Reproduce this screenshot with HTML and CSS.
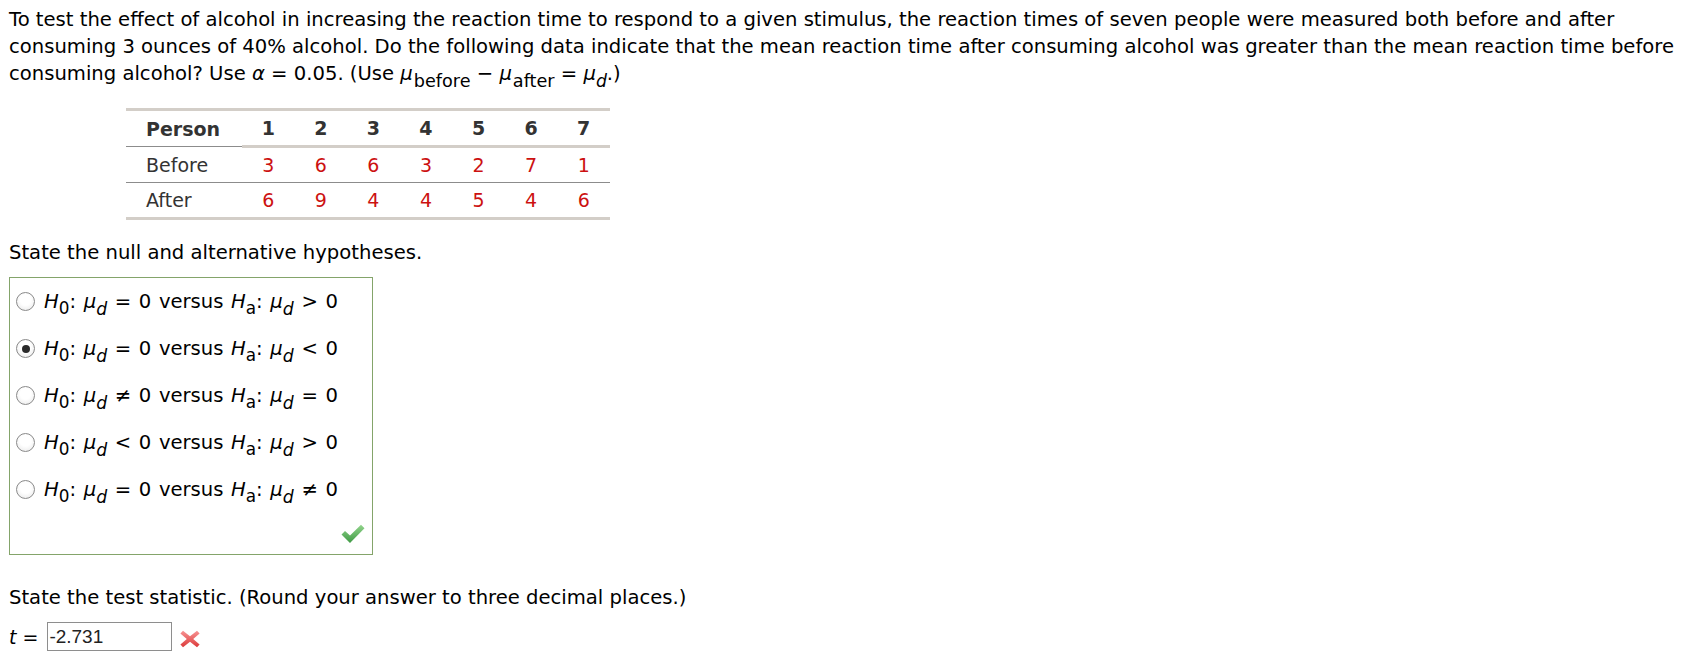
FILE: index.html
```html
<!DOCTYPE html>
<html>
<head>
<meta charset="utf-8">
<link rel="stylesheet" href="styles.css">
</head>
<body>
<div class="page">
  <p class="intro">To test the effect of alcohol in increasing the reaction time to respond to a given stimulus, the reaction times of seven people were measured both before and after consuming 3 ounces of 40% alcohol. Do the following data indicate that the mean reaction time after consuming alcohol was greater than the mean reaction time before consuming alcohol? Use <i class="m">α</i> = 0.05. (Use <i class="m">μ</i><sub class="sw">before</sub> − <i class="m">μ</i><sub class="sw">after</sub> = <i class="m">μ</i><sub class="sd"><i>d</i></sub>.)</p>

  <table class="data">
    <colgroup><col class="c0"><col class="cn"><col class="cn"><col class="cn"><col class="cn"><col class="cn"><col class="cn"><col class="cn"></colgroup>
    <tr class="head"><th class="lbl">Person</th><th>1</th><th>2</th><th>3</th><th>4</th><th>5</th><th>6</th><th>7</th></tr>
    <tr class="mid"><td class="lbl">Before</td><td>3</td><td>6</td><td>6</td><td>3</td><td>2</td><td>7</td><td>1</td></tr>
    <tr class="last"><td class="lbl">After</td><td>6</td><td>9</td><td>4</td><td>4</td><td>5</td><td>4</td><td>6</td></tr>
  </table>

  <p class="q q1">State the null and alternative hypotheses.</p>

  <div class="choices">
    <div class="opt"><span class="radio"></span><span class="expr"><i>H</i><sub>0</sub>: <i>μ</i><sub class="sd"><i>d</i></sub> = 0 versus <i>H</i><sub>a</sub>: <i>μ</i><sub class="sd"><i>d</i></sub> &gt; 0</span></div>
    <div class="opt"><span class="radio on"></span><span class="expr"><i>H</i><sub>0</sub>: <i>μ</i><sub class="sd"><i>d</i></sub> = 0 versus <i>H</i><sub>a</sub>: <i>μ</i><sub class="sd"><i>d</i></sub> &lt; 0</span></div>
    <div class="opt"><span class="radio"></span><span class="expr"><i>H</i><sub>0</sub>: <i>μ</i><sub class="sd"><i>d</i></sub> ≠ 0 versus <i>H</i><sub>a</sub>: <i>μ</i><sub class="sd"><i>d</i></sub> = 0</span></div>
    <div class="opt"><span class="radio"></span><span class="expr"><i>H</i><sub>0</sub>: <i>μ</i><sub class="sd"><i>d</i></sub> &lt; 0 versus <i>H</i><sub>a</sub>: <i>μ</i><sub class="sd"><i>d</i></sub> &gt; 0</span></div>
    <div class="opt"><span class="radio"></span><span class="expr"><i>H</i><sub>0</sub>: <i>μ</i><sub class="sd"><i>d</i></sub> = 0 versus <i>H</i><sub>a</sub>: <i>μ</i><sub class="sd"><i>d</i></sub> ≠ 0</span></div>
    <div class="mark">
      <svg width="24" height="20" viewBox="0 0 24 20">
        <defs><linearGradient id="gk" x1="0" y1="0" x2="0" y2="1"><stop offset="0" stop-color="#92d48c"/><stop offset="1" stop-color="#3f9a45"/></linearGradient></defs>
        <path d="M0.5 10.5 L4 7 L9 11.5 L20 0.8 L23.5 4.3 L9 19 Z" fill="url(#gk)"/>
      </svg>
    </div>
  </div>

  <p class="q q2">State the test statistic. (Round your answer to three decimal places.)</p>

  <div class="answer">
    <i class="tv">t</i><span class="eq">=</span><span class="inp">-2.731</span>
    <svg class="xmark" width="20" height="18" viewBox="0 0 20 18">
      <defs><linearGradient id="gx" x1="0" y1="0" x2="0" y2="1"><stop offset="0" stop-color="#f79494"/><stop offset="1" stop-color="#dc3a3a"/></linearGradient></defs>
      <path d="M3 0.8 L10 6.3 L17 0.8 L19.6 3.4 L13.2 9 L19.6 14.6 L17 17.2 L10 11.7 L3 17.2 L0.4 14.6 L6.8 9 L0.4 3.4 Z" fill="url(#gx)"/>
    </svg>
  </div>
</div>
</body>
</html>
```

FILE: styles.css
```css
html, body {
  margin: 0;
  padding: 0;
  background: #fff;
}
.page {
  padding: 6px 2px 0 9px;
  font-family: "DejaVu Sans", Verdana, sans-serif;
  font-size: 19.6px;
  color: #000;
}
p { margin: 0; }
.intro {
  line-height: 27px;
}
.m { font-style: italic; }
sub {
  font-size: 0.86em;
  vertical-align: -0.38em;
  line-height: 0;
}
sub.sd { font-size: 0.88em; }
sub.sw { font-size: 0.9em; margin-left: 1px; }

.data {
  margin-top: 21px;
  margin-left: 117px;
  border-collapse: collapse;
  table-layout: fixed;
  width: 484px;
  border-top: 3px solid #d3cec8;
  border-bottom: 3px solid #d3cec8;
  color: #333;
  font-size: 19px;
}
.data col.c0 { width: 116px; }
.data col.cn { width: 52.57px; }
.data th, .data td {
  padding: 0;
  text-align: center;
  height: 34px;
  line-height: 34px;
}
.data .lbl { text-align: left; padding-left: 20px; }
.data th { font-weight: bold; }
.data tr.head th { border-bottom: 3px solid #d3cec8; }
.data tr.head th.lbl { border-bottom: 1px solid #8c8c8c; }
.data tr.mid td { border-bottom: 1px solid #8c8c8c; }
.data td { color: #cc1111; }
.data td.lbl { color: #333; }

.q1 {
  margin-top: 19px;
  line-height: 27px;
}
.choices {
  margin-top: 11px;
  width: 362px;
  border: 1px solid #84a46a;
  padding: 0 0 10px 0;
}
.opt {
  height: 47px;
  display: flex;
  align-items: center;
  gap: 9px;
  padding-left: 6px;
}
.radio {
  width: 17px;
  height: 17px;
  border-radius: 50%;
  border: 1px solid #8a8a8a;
  background: radial-gradient(circle at 50% 40%, #ffffff 40%, #e6e6e6 100%);
  display: flex;
  align-items: center;
  justify-content: center;
  flex: none;
}
.radio.on::after {
  content: "";
  width: 8px;
  height: 8px;
  border-radius: 50%;
  background: #2a2a2a;
}
.expr {
  white-space: nowrap;
  word-spacing: 1.4px;
}
.mark {
  display: flex;
  justify-content: flex-end;
  padding-right: 7px;
  margin-top: 11px;
}
.mark svg { display: block; }

.q2 {
  margin-top: 29px;
  line-height: 27px;
}
.answer {
  margin-top: 11px;
  display: flex;
  align-items: center;
  height: 29px;
  font-size: 19px;
}
.eq { margin-left: 6px; }
.inp {
  margin-left: 9px;
  box-sizing: border-box;
  width: 125px;
  height: 29px;
  border: 1px solid #8e8e8e;
  font-family: "Liberation Sans", Arial, sans-serif;
  font-size: 19px;
  line-height: 27px;
  padding-left: 1px;
  color: #222;
}
.xmark {
  margin-left: 8px;
  margin-top: 5px;
  display: block;
}
```
